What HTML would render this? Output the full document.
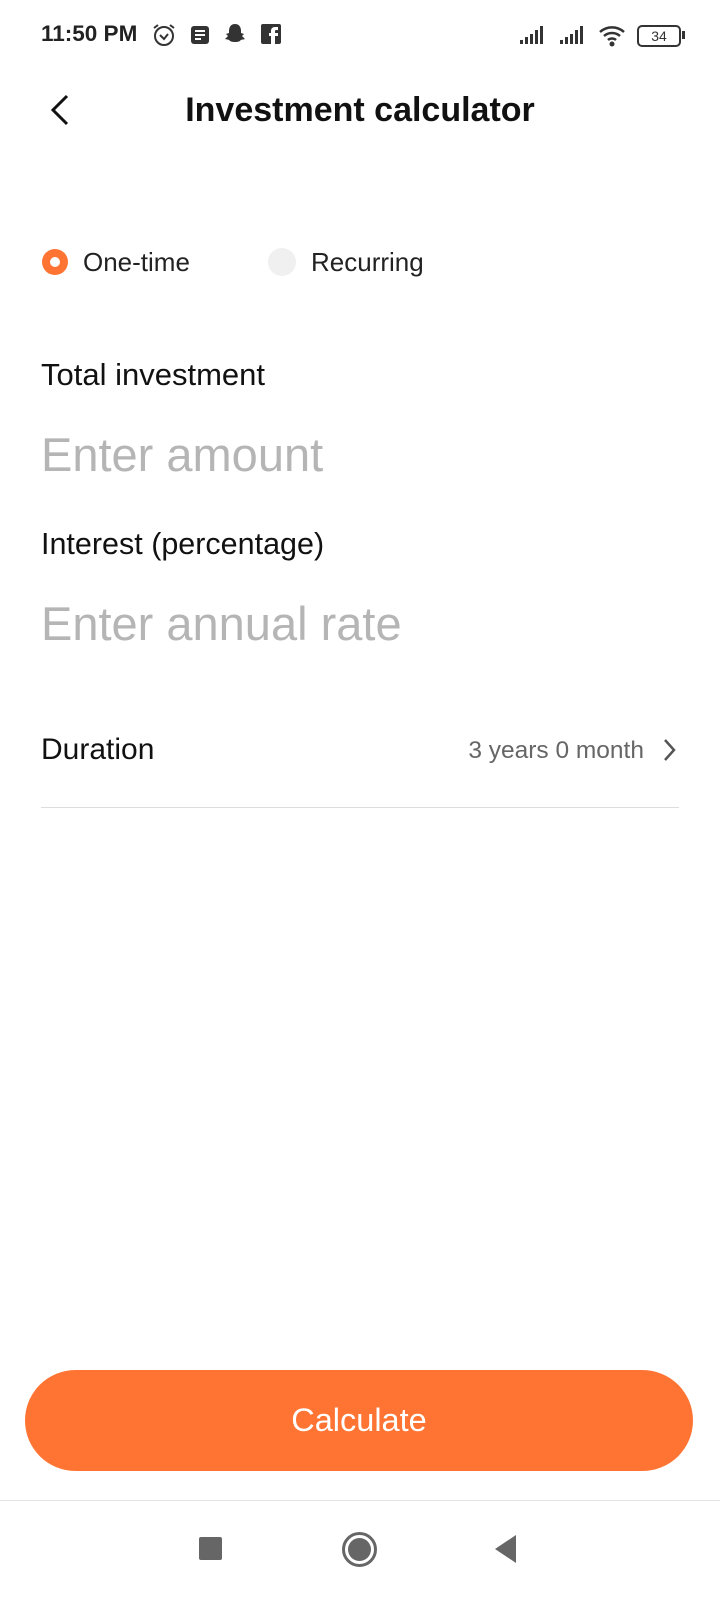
<!DOCTYPE html>
<html><head><meta charset="utf-8"><style>
body{margin:0;width:720px;height:1600px;background:#fff;font-family:"Liberation Sans",Roboto,sans-serif;position:relative;overflow:hidden;color:#111}
.a{position:absolute;white-space:nowrap;line-height:1}
</style></head><body>
<div class="a" style="left:41px;top:23px;font-size:22.5px;font-weight:bold;color:#222">11:50 PM</div>
<svg class="a" style="left:151px;top:23px" width="26" height="24" viewBox="0 0 26 24"><circle cx="13" cy="13" r="9" fill="none" stroke="#333" stroke-width="2"/><path d="M9 12l4 4 4-5M3 5l4-3M23 5l-4-3" fill="none" stroke="#333" stroke-width="2"/></svg>
<svg class="a" style="left:190px;top:25px" width="20" height="20"><rect x="1" y="1" width="18" height="18" rx="3" fill="#333"/><path d="M5 6h10M5 10h10M5 14h6" stroke="#fff" stroke-width="2"/></svg>
<svg class="a" style="left:224px;top:23px" width="22" height="22" viewBox="0 0 22 22"><path d="M11 1c4 0 6 3 6 7v2l3 1-2 2 3 3c-2 1-4 0-5 2-2 1-4 1-5 1s-3 0-5-1c-1-2-3-1-5-2l3-3-2-2 3-1V8c0-4 2-7 6-7z" fill="#333"/></svg>
<svg class="a" style="left:261px;top:24px" width="20" height="20"><rect width="20" height="20" rx="2" fill="#333"/><path d="M14 20v-8h3v-3h-3V7c0-1 1-1 2-1h1V3h-3c-3 0-4 2-4 4v2H8v3h2v8z" fill="#fff"/></svg>
<svg class="a" style="left:520px;top:25px" width="30" height="20"><rect x="0" y="15" width="3" height="4" fill="#333"/><rect x="5" y="12" width="3" height="7" fill="#333"/><rect x="10" y="9" width="3" height="10" fill="#333"/><rect x="15" y="5" width="3" height="14" fill="#333"/><rect x="20" y="1" width="3" height="18" fill="#333"/></svg>
<svg class="a" style="left:560px;top:25px" width="30" height="20"><rect x="0" y="15" width="3" height="4" fill="#333"/><rect x="5" y="12" width="3" height="7" fill="#333"/><rect x="10" y="9" width="3" height="10" fill="#333"/><rect x="15" y="5" width="3" height="14" fill="#333"/><rect x="20" y="1" width="3" height="18" fill="#333"/></svg>
<svg class="a" style="left:598px;top:24px" width="30" height="24" viewBox="0 0 30 24"><path d="M2 8a18 18 0 0 1 24 0M6 12a12 12 0 0 1 16 0M10 16a6 6 0 0 1 8 0" fill="none" stroke="#333" stroke-width="2.5"/><circle cx="14" cy="20" r="2.5" fill="#333"/></svg>
<div class="a" style="left:637px;top:25px;width:40px;height:18px;border:2px solid #333;border-radius:5px;font-size:14px;text-align:center;line-height:18px;color:#333">34</div>
<div class="a" style="left:682px;top:31px;width:3px;height:8px;background:#333"></div>

<svg class="a" style="left:48px;top:94px" width="24" height="32"><path d="M19 2L5 16l14 14" fill="none" stroke="#111" stroke-width="3"/></svg>
<div class="a" style="left:0;width:720px;text-align:center;top:93px;font-size:34px;font-weight:bold;">Investment calculator</div>

<div class="a" style="left:42px;top:249px;width:26px;height:26px;border-radius:50%;background:#ff7433"></div>
<div class="a" style="left:50px;top:257px;width:10px;height:10px;border-radius:50%;background:#fff"></div>
<div class="a" style="left:83px;top:249px;font-size:26px;color:#222">One-time</div>
<div class="a" style="left:268px;top:248px;width:28px;height:28px;border-radius:50%;background:#f0f0f0"></div>
<div class="a" style="left:311px;top:249px;font-size:26px;color:#222">Recurring</div>

<div class="a" style="left:41px;top:359px;font-size:31px;color:#111">Total investment</div>
<div class="a" style="left:41px;top:431px;font-size:47px;color:#b5b5b5">Enter amount</div>
<div class="a" style="left:41px;top:529px;font-size:30.5px;color:#111">Interest (percentage)</div>
<div class="a" style="left:41px;top:600px;font-size:47px;color:#b5b5b5">Enter annual rate</div>
<div class="a" style="left:41px;top:735px;font-size:30px;color:#111">Duration</div>
<div class="a" style="right:76px;top:739px;font-size:24.5px;color:#666">3 years 0 month</div>
<svg class="a" style="left:662px;top:738px" width="16" height="24"><path d="M3 2l9 10-9 10" fill="none" stroke="#555" stroke-width="2.5"/></svg>
<div class="a" style="left:41px;top:807px;width:638px;height:1px;background:#ddd"></div>

<div class="a" style="left:25px;top:1370px;width:668px;height:101px;border-radius:51px;background:#ff7433;color:#fff;font-size:32.5px;text-align:center;line-height:101px">Calculate</div>
<div class="a" style="left:0;top:1500px;width:720px;height:1px;background:#e4e4e4"></div>
<div class="a" style="left:199px;top:1537px;width:23px;height:23px;background:#666;border-radius:2px"></div>
<div class="a" style="left:342px;top:1532px;width:29px;height:29px;border:3px solid #666;border-radius:50%"></div>
<div class="a" style="left:348px;top:1538px;width:23px;height:23px;background:#666;border-radius:50%"></div>
<svg class="a" style="left:494px;top:1535px" width="24" height="28"><path d="M22 0v28L1 14z" fill="#666"/></svg>
</body></html>
